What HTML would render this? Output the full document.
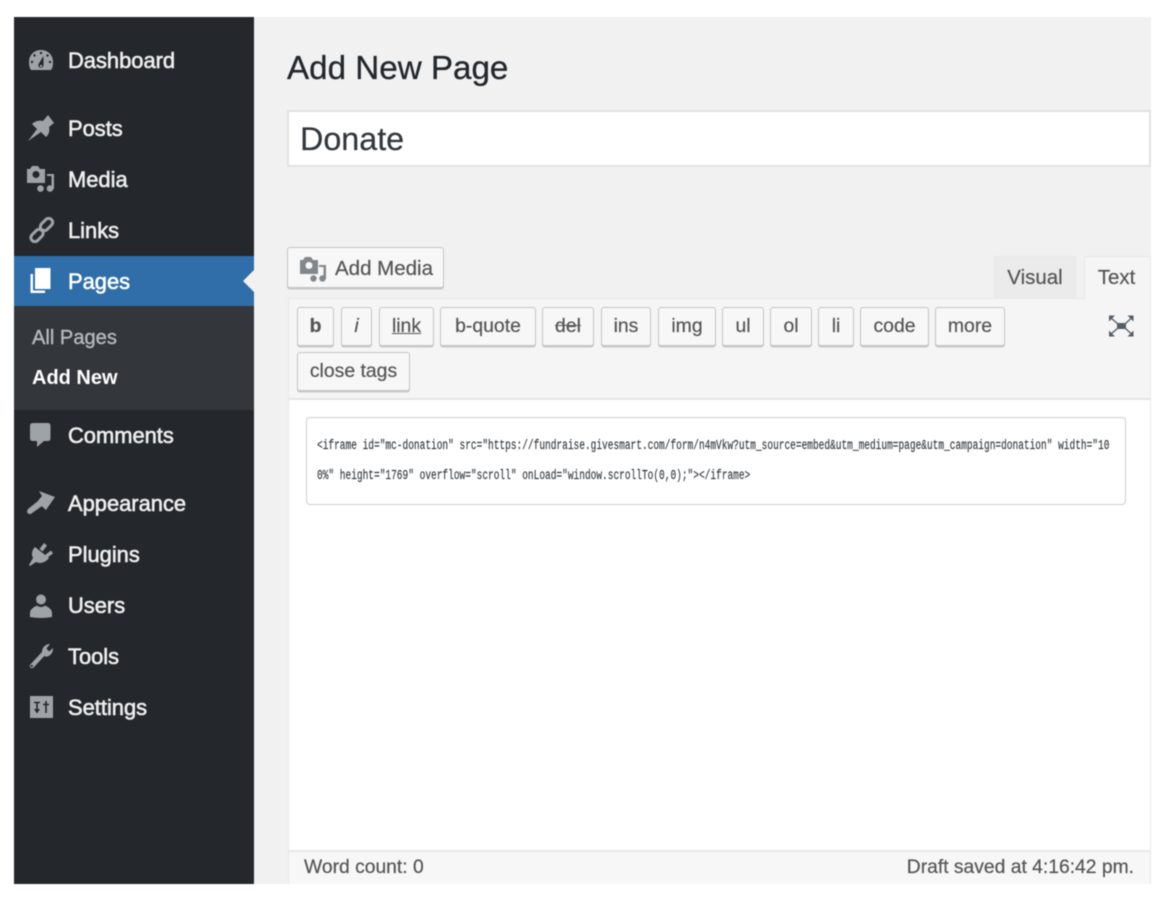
<!DOCTYPE html>
<html><head><meta charset="utf-8"><title>Add New Page</title>
<style>
html,body{margin:0;padding:0;background:#fff}
#p{position:relative;width:1174px;height:914px;overflow:hidden;background:#fff;font-family:"Liberation Sans",sans-serif;filter:blur(.5px)}
#p div{position:absolute;box-sizing:border-box;white-space:nowrap}
.m{left:68px;color:#eee;font-size:21.9px;line-height:30px;height:30px;-webkit-text-stroke:.6px #eee}
.b{top:307px;height:39px;background:#f7f7f7;border:1px solid #c4c4c4;border-radius:3px;box-shadow:0 1.5px 0 #c8c8c8;color:#555;font-size:19.4px;line-height:37px;text-align:center;-webkit-text-stroke:.2px #555}
.c{left:316.500px;font-family:"Liberation Mono",monospace;font-size:11.4px;line-height:16px;color:#32373c;transform-origin:0 0;transform:scale(.834,1.18);-webkit-text-stroke:.12px #32373c}
</style></head><body>
<div id="p">
<div style="left:14px;top:17px;width:1137px;height:867px;background:#f1f1f1"></div>
<div style="left:14px;top:17px;width:240px;height:867px;background:#24272c"></div>
<div style="left:14px;top:256px;width:240px;height:50px;background:#2f6ea8"></div>
<div style="left:14px;top:306px;width:240px;height:104px;background:#33373c"></div>

<div class="m" style="top:46px">Dashboard</div>
<div class="m" style="top:114px">Posts</div>
<div class="m" style="top:165px">Media</div>
<div class="m" style="top:216px">Links</div>
<div class="m" style="top:267px;color:#fff;-webkit-text-stroke:.6px #fff">Pages</div>
<div style="left:32px;top:323px;font-size:20.1px;line-height:30px;color:#b4b9be;-webkit-text-stroke:.4px #b4b9be">All Pages</div>
<div style="left:32px;top:363px;font-size:20px;line-height:30px;color:#fff;font-weight:bold">Add New</div>
<div class="m" style="top:421px">Comments</div>
<div class="m" style="top:489px">Appearance</div>
<div class="m" style="top:540px">Plugins</div>
<div class="m" style="top:591px">Users</div>
<div class="m" style="top:642px">Tools</div>
<div class="m" style="top:693px">Settings</div>

<div style="left:287px;top:49px;font-size:33.2px;line-height:40px;color:#23282d;-webkit-text-stroke:.3px #23282d">Add New Page</div>
<div style="left:287px;top:110px;width:864px;height:57px;background:#fff;border:2px solid #e2e2e2"></div>
<div style="left:300px;top:119px;font-size:32.3px;line-height:40px;color:#32373c;-webkit-text-stroke:.2px #32373c">Donate</div>

<div style="left:287px;top:247px;width:157px;height:41px;background:#f7f7f7;border:1px solid #c4c4c4;border-radius:3px;box-shadow:0 1.5px 0 #c8c8c8"></div>
<div style="left:335px;top:254px;font-size:20.5px;line-height:30px;color:#555;-webkit-text-stroke:.2px #555">Add Media</div>

<div style="left:994px;top:256px;width:82px;height:42px;background:#ebebeb;border:1px solid #e8e8e8;border-bottom:0;color:#555;font-size:20.5px;line-height:42px;text-align:center;-webkit-text-stroke:.2px #555">Visual</div>
<div style="left:288px;top:298px;width:863px;height:102px;background:#f5f5f5;border:1px solid #e8e8e8;border-bottom:2px solid #e5e5e5"></div>
<div style="left:1084px;top:256px;width:67px;height:44px;background:#f5f5f5;border:1px solid #e8e8e8;border-bottom:0;color:#555;font-size:20.5px;line-height:42px;text-align:center;-webkit-text-stroke:.2px #555;padding-right:2px">Text</div>

<div class="b" style="left:297px;width:37px;font-weight:bold">b</div>
<div class="b" style="left:341px;width:31px;font-style:italic">i</div>
<div class="b" style="left:379px;width:55px;text-decoration:underline">link</div>
<div class="b" style="left:440px;width:96px">b-quote</div>
<div class="b" style="left:542px;width:52px;text-decoration:line-through">del</div>
<div class="b" style="left:601px;width:50px">ins</div>
<div class="b" style="left:658px;width:58px">img</div>
<div class="b" style="left:722px;width:42px">ul</div>
<div class="b" style="left:770px;width:42px">ol</div>
<div class="b" style="left:818px;width:36px">li</div>
<div class="b" style="left:860px;width:69px">code</div>
<div class="b" style="left:935px;width:70px">more</div>
<div class="b" style="left:297px;top:352px;width:113px">close tags</div>

<div style="left:288px;top:400px;width:863px;height:451px;background:#fff;border-left:1px solid #e8e8e8;border-right:1px solid #e8e8e8"></div>
<div style="left:306px;top:417px;width:820px;height:88px;background:#fff;border:1px solid #cfcfcf;border-radius:4px"></div>
<div class="c" style="top:437px">&lt;iframe id="mc-donation" src="https://fundraise.givesmart.com/form/n4mVkw?utm_source=embed&amp;utm_medium=page&amp;utm_campaign=donation" width="10</div>
<div class="c" style="top:467px">0%" height="1769" overflow="scroll" onLoad="window.scrollTo(0,0);"&gt;&lt;/iframe&gt;</div>

<div style="left:288px;top:850px;width:863px;height:34px;background:#f7f7f7;border-top:2px solid #e8e8e8;border-left:1px solid #e8e8e8;border-right:1px solid #e8e8e8"></div>
<div style="left:304px;top:854px;font-size:19.3px;line-height:28px;color:#555;-webkit-text-stroke:.2px #555">Word count: 0</div>
<div style="right:40px;top:854px;font-size:19.3px;line-height:28px;color:#555;-webkit-text-stroke:.2px #555">Draft saved at 4:16:42 pm.</div>

<svg width="1174" height="914" viewBox="0 0 1174 914" style="position:absolute;left:0;top:0">
<path d="M243 281L254 270V292Z" fill="#f1f1f1"/>
<g fill="#9ea3a8">
<!-- dashboard -->
<path d="M31 70C29 67 29 64 29 62C29 55 34 50 41 50C48 50 53 55 53 62C53 65 53 67 51 70Z"/>
<g fill="#24272c"><circle cx="41" cy="53" r="1.2"/><circle cx="34.500" cy="55.500" r="1.200"/><circle cx="47.500" cy="55.500" r="1.200"/><circle cx="32" cy="62" r="1.200"/><circle cx="50" cy="62" r="1.200"/><path d="M43.500 56L43.500 65A2.600 2.600 0 1 1 38.600 64Z"/></g>
<circle cx="41" cy="66" r="1.200"/>
<!-- posts -->
<path d="M28 141L37 129L32 124C35 121 39 120 43 121L48 115L54 123L49 127C50 131 49 134 46 137L41 132Z"/>
<!-- media -->
<path fill-rule="evenodd" d="M27 169H30L32 166H38L40 169H45V183H27ZM36 171A3.500 3.500 0 1 0 36 178A3.500 3.500 0 1 0 36 171Z"/>
<circle cx="40.500" cy="188.500" r="3.300"/><circle cx="50" cy="188.500" r="3.300"/>
<path d="M47 174H54V189H51.500V176H47Z"/>
<!-- pages -->
<g fill="#fff"><path d="M35 268H50.500V289H35Z"/><path d="M30.500 274H33V290.500H45V293H30.500Z"/></g>
<!-- comments -->
<path d="M33 423H48Q50.500 423 50.500 426V438Q50.500 441 48 441H44L37 447V441H33Q30 441 30 438V426Q30 423 33 423Z"/>
<!-- appearance -->
<path d="M39 491L55 497L46 510L37 502L42 496Z"/>
<path d="M38 501L28 509Q26.500 511 27.500 513Q29.500 515 31.500 513.500L42 506Z"/>
<!-- plugins -->
<path d="M35 547L49 558C45 563 40 564 36 562L30 566L29 565L33 558C31 554 32 550 35 547Z"/>
<path d="M39.500 549L44 543L47 545.500L42.500 551.500ZM45 555L51 550.500L53 553.500L47 558Z"/>
<!-- users -->
<circle cx="41" cy="599.500" r="5"/>
<path d="M30 617V613C30 609 34 607 37 605.500C39 607.500 43 607.500 45 605.500C48 607 52 609 52 613V617Q41 619 30 617Z"/>
<!-- settings -->
<path d="M30 696H53V718H30Z"/>
</g>
<g stroke="#24272c" stroke-width="1.600" fill="#24272c">
<path d="M37 702V712M46 701V713" fill="none"/>
<path d="M34 709H40L37 713.500Z" stroke="none"/>
<path d="M34 702.500H40M43 704.500H49" fill="none"/>
</g>
<!-- links -->
<g fill="none" stroke="#9ea3a8" stroke-width="3">
<rect x="30" y="231.500" width="14" height="8" rx="4" transform="rotate(-45 37 235.500)"/>
<rect x="39.500" y="220.500" width="14" height="8" rx="4" transform="rotate(-45 46.500 224.500)"/>
</g>
<!-- tools -->
<path d="M32 666L45 652" stroke="#9ea3a8" stroke-width="4.500" stroke-linecap="round"/>
<path d="M42 652C42 647 46 644 50 644L46.500 648.500L49 651.500L53 648C53.500 653 49 657.500 45 656.500Z" fill="#9ea3a8"/>
<circle cx="31.800" cy="666" r="1.100" fill="#24272c"/>
<!-- add media -->
<g fill="#82878c">
<path fill-rule="evenodd" d="M300 260H303L305 257H311L313 260H318V274H300ZM309 262A3.500 3.500 0 1 0 309 269A3.500 3.500 0 1 0 309 262Z"/>
<circle cx="313.500" cy="278.500" r="3.200"/><circle cx="322.500" cy="278.500" r="3.200"/>
<path d="M319 265H326V279H323.500V267H319Z"/>
</g>
<!-- fullscreen -->
<g fill="#555d66">
<path d="M1117 323H1126V329H1117Z"/>
<path d="M1109 315.500H1115L1109 321.500ZM1133.500 315.500V321.500L1127.500 315.500ZM1109 336.500V330.500L1115 336.500ZM1133.500 336.500H1127.500L1133.500 330.500Z"/>
</g>
<path d="M1111 318L1118 324M1131.500 318L1125 324M1111 334L1118 328M1131.500 334L1125 328" stroke="#555d66" stroke-width="1.300"/>
</svg>
</div>
</body></html>
